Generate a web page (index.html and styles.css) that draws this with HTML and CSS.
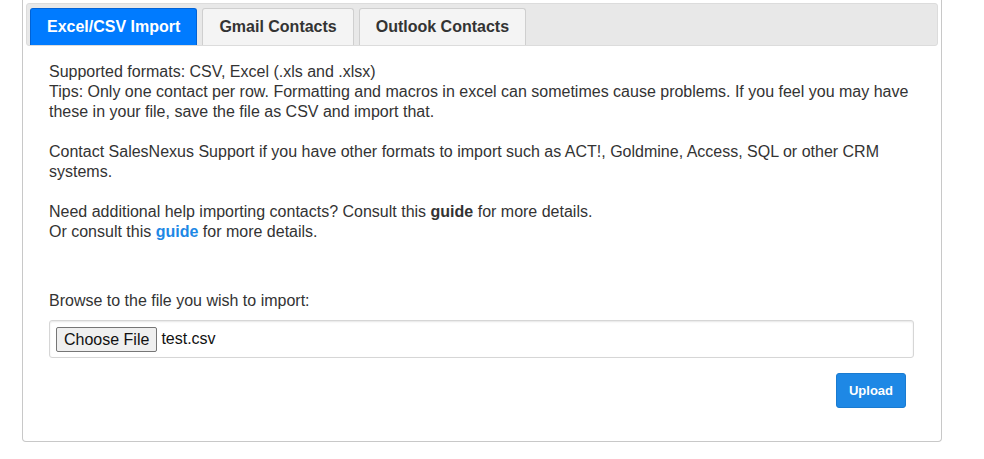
FILE: index.html
```html
<!DOCTYPE html>
<html lang="en">
<head>
    <meta charset="UTF-8">
    <title>Import Contacts</title>
    <link rel="stylesheet" href="styles.css">
</head>
<body>
    <div class="import-panel">
        <ul class="tabs">
            <li class="tab active">Excel/CSV Import</li>
            <li class="tab">Gmail Contacts</li>
            <li class="tab">Outlook Contacts</li>
        </ul>

        <div class="tab-content">
            <p class="info">
                Supported formats: CSV, Excel (.xls and .xlsx)<br>
                Tips: Only one contact per row. Formatting and macros in excel can sometimes cause problems. If you feel you may have these in your file, save the file as CSV and import that.<br>
                <br>
                Contact SalesNexus Support if you have other formats to import such as ACT!, Goldmine, Access, SQL or other CRM systems.<br>
                <br>
                Need additional help importing contacts? Consult this <b>guide</b> for more details.<br>
                Or consult this <a href="#" class="guide-link">guide</a> for more details.
            </p>

            <label class="file-label">Browse to the file you wish to import:</label>
            <div class="file-box">
                <span class="choose-btn">Choose File</span>
                <span class="file-name">test.csv</span>
            </div>

            <div class="actions">
                <button class="upload-btn">Upload</button>
            </div>
        </div>
    </div>
</body>
</html>
```

FILE: styles.css
```css
body {
    margin: 0;
    background: #fff;
    font-family: "Liberation Sans", Arial, sans-serif;
    color: #333;
}

.import-panel {
    margin-left: 22px;
    width: 920px;
    border: 1px solid #c8c8c8;
    border-top: none;
    border-radius: 0 0 4px 4px;
    padding: 3px 3px 0 3px;
    box-sizing: border-box;
    height: 442px;
}

/* barra de pestañas */
.tabs {
    list-style: none;
    margin: 0;
    padding: 4px 0 0 3px;
    display: flex;
    gap: 5px;
    background: #e8e8e8;
    border: 1px solid #dcdcdc;
    border-radius: 3px;
    height: 37px;
}

.tab {
    padding: 0 16px;
    background: #f4f4f4;
    border: 1px solid #cfcfcf;
    border-bottom: none;
    border-radius: 3px 3px 0 0;
    font-weight: bold;
    font-size: 16px;
    color: #333;
    display: flex;
    align-items: center;
    height: 37px;
    box-sizing: border-box;
}

.tab.active {
    background: #007bff;
    border-color: #0062d6;
    color: #fff;
}

.tab-content {
    padding: 16px 24px 0 23px;
}

.info {
    margin: 0;
    font-size: 16px;
    line-height: 20px;
}

.guide-link {
    color: #1e88e5;
    font-weight: bold;
    text-decoration: none;
}

.file-label {
    display: block;
    margin-top: 49px;
    font-size: 16px;
    line-height: 20px;
}

.file-box {
    margin-top: 9px;
    height: 38px;
    border: 1px solid #d6d6d6;
    border-radius: 3px;
    box-shadow: inset 0 1px 2px rgba(0, 0, 0, 0.1);
    display: flex;
    align-items: center;
    padding-left: 6px;
    box-sizing: border-box;
}

.choose-btn {
    font-size: 16px;
    color: #111;
    background: #efefef;
    border: 1px solid #767676;
    border-radius: 2px;
    padding: 3px 7px 2px;
    margin-right: 4px;
}

.file-name {
    font-size: 16px;
    color: #111;
}

.actions {
    display: flex;
    justify-content: flex-end;
    padding-right: 8px;
    margin-top: 15px;
}

.upload-btn {
    background: #1e88e5;
    color: #fff;
    border: 1px solid #1a7bd0;
    border-radius: 3px;
    font-family: "Liberation Sans", Arial, sans-serif;
    font-weight: bold;
    font-size: 13px;
    width: 70px;
    height: 35px;
}
```
